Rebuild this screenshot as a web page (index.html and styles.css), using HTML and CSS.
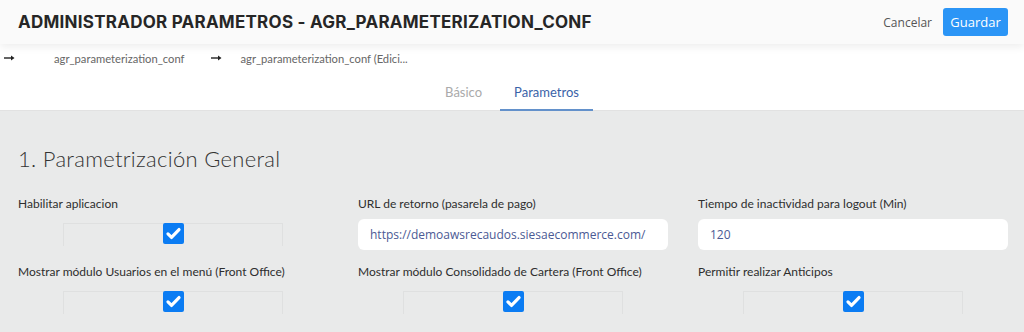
FILE: index.html
```html
<!DOCTYPE html>
<html lang="es">
<head>
    <meta charset="UTF-8">
    <meta name="viewport" content="width=device-width, initial-scale=1.0">
    <title>Administrador Parametros</title>
    <link rel="stylesheet" href="styles.css">
</head>
<body>
    <header class="topbar">
        <h1 class="title">ADMINISTRADOR PARAMETROS - AGR_PARAMETERIZATION_CONF</h1>
        <div class="actions">
            <button class="cancel">Cancelar</button>
            <button class="save">Guardar</button>
        </div>
    </header>

    <nav class="crumbs">
        <svg class="arrow" viewBox="0 0 11 6" width="11" height="6"><path d="M0 3h8" stroke="#222" stroke-width="1.4"/><path d="M7 0.5L10.5 3 7 5.5z" fill="#222"/></svg>
        <span class="crumb first">agr_parameterization_conf</span>
        <svg class="arrow" viewBox="0 0 11 6" width="11" height="6"><path d="M0 3h8" stroke="#222" stroke-width="1.4"/><path d="M7 0.5L10.5 3 7 5.5z" fill="#222"/></svg>
        <span class="crumb last">agr_parameterization_conf (Edici...</span>
    </nav>

    <div class="tabs">
        <div class="tab">Básico</div>
        <div class="tab active">Parametros</div>
    </div>

    <main class="panel">
        <h2 class="section">1. Parametrización General</h2>
        <div class="grid">
            <div class="field">
                <label class="label">Habilitar aplicacion</label>
                <div class="check-wrap">
                    <span class="check"><svg viewBox="0 0 24 24" width="19" height="19"><path d="M5 12.5l4.5 4.5L19 7" fill="none" stroke="#fff" stroke-width="4" stroke-linecap="round" stroke-linejoin="round"/></svg></span>
                </div>
            </div>
            <div class="field">
                <label class="label">URL de retorno (pasarela de pago)</label>
                <input class="input" type="text" value="https://demoawsrecaudos.siesaecommerce.com/">
            </div>
            <div class="field">
                <label class="label">Tiempo de inactividad para logout (Min)</label>
                <input class="input" type="text" value="120">
            </div>
            <div class="field">
                <label class="label">Mostrar módulo Usuarios en el menú (Front Office)</label>
                <div class="check-wrap">
                    <span class="check"><svg viewBox="0 0 24 24" width="19" height="19"><path d="M5 12.5l4.5 4.5L19 7" fill="none" stroke="#fff" stroke-width="4" stroke-linecap="round" stroke-linejoin="round"/></svg></span>
                </div>
            </div>
            <div class="field">
                <label class="label">Mostrar módulo Consolidado de Cartera (Front Office)</label>
                <div class="check-wrap">
                    <span class="check"><svg viewBox="0 0 24 24" width="19" height="19"><path d="M5 12.5l4.5 4.5L19 7" fill="none" stroke="#fff" stroke-width="4" stroke-linecap="round" stroke-linejoin="round"/></svg></span>
                </div>
            </div>
            <div class="field">
                <label class="label">Permitir realizar Anticipos</label>
                <div class="check-wrap">
                    <span class="check"><svg viewBox="0 0 24 24" width="19" height="19"><path d="M5 12.5l4.5 4.5L19 7" fill="none" stroke="#fff" stroke-width="4" stroke-linecap="round" stroke-linejoin="round"/></svg></span>
                </div>
            </div>
        </div>
    </main>
</body>
</html>
```
FILE: styles.css
```css
body{
    margin: 0;
    font-family: Lato, "Open Sans", sans-serif;
    background-color: #fff;
    color: #333;
    height: 100vh;
    overflow: hidden;
    display: flex;
    flex-direction: column;
}
.topbar{
    height: 44px;
    flex-shrink: 0;
    background-color: #fafafa;
    box-shadow: 0 3px 8px rgba(0,0,0,0.07);
    display: flex;
    align-items: center;
    justify-content: space-between;
    padding: 0 16px 0 18px;
    position: relative;
}
.title{
    margin: 0;
    font-family: Inter, sans-serif;
    font-size: 17px;
    font-weight: 700;
    color: #262626;
    letter-spacing: 0.25px;
}
.actions{
    display: flex;
    align-items: center;
    gap: 11px;
}
.cancel{
    background: none;
    border: none;
    font-family: "Open Sans", sans-serif;
    font-size: 12px;
    color: #555;
    padding: 0;
    cursor: pointer;
}
.save{
    width: 65px;
    height: 28px;
    border: none;
    border-radius: 3px;
    background-color: #2b95f6;
    color: #fff;
    font-family: "Open Sans", sans-serif;
    font-size: 13px;
    cursor: pointer;
}
.crumbs{
    display: flex;
    align-items: center;
    height: 28px;
    flex-shrink: 0;
    padding-left: 4px;
    font-size: 11.2px;
    color: #666;
}
.crumb.first{
    margin-left: 39px;
    margin-right: 26px;
}
.crumb.last{
    margin-left: 19px;
}
.tabs{
    display: flex;
    justify-content: center;
    height: 38px;
    flex-shrink: 0;
    border-bottom: 1px solid #e2e2e2;
}
.tab{
    font-size: 13px;
    color: #aaa;
    padding: 12px 14px 0;
    margin: 0 2px;
}
.tab.active{
    color: #3a62a8;
    border-bottom: 2px solid #6391cb;
    margin-bottom: -1px;
}
.panel{
    flex: 1;
    background-color: #e9eaea;
    padding: 34px 17px 0 18px;
}
.section{
    margin: 0 0 24px;
    font-size: 22px;
    font-weight: 300;
    color: #333;
    letter-spacing: 0.3px;
}
.grid{
    display: grid;
    grid-template-columns: repeat(3, 310px);
    column-gap: 30px;
    row-gap: 14px;
}
.field{
    display: flex;
    flex-direction: column;
}
.label{
    font-size: 12px;
    line-height: 16px;
    margin-bottom: 7px;
    color: #2e2e2e;
}
.input{
    height: 31px;
    box-sizing: border-box;
    border: none;
    border-radius: 6px;
    background-color: #fff;
    padding: 0 12px;
    font-family: "Open Sans", sans-serif;
    font-size: 12px;
    color: #4b5a94;
    outline: none;
}
.check-wrap{
    width: 218px;
    height: 22px;
    margin: 4px auto 0;
    border: 1px solid #dfe0e0;
    border-bottom: none;
    display: flex;
    justify-content: center;
}
.check{
    width: 21px;
    height: 21px;
    margin-top: -1px;
    background-color: #0b7cf3;
    border-radius: 2px;
    display: flex;
    align-items: center;
    justify-content: center;
}
```
